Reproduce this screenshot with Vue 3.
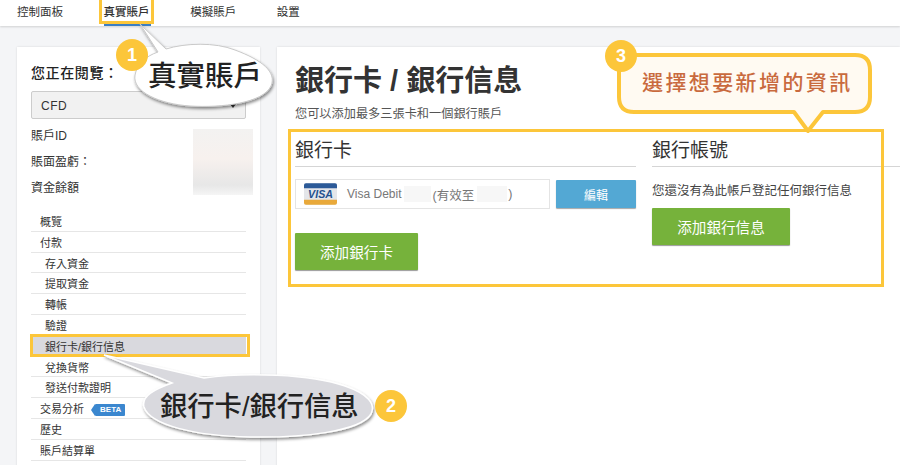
<script setup>
const navItems = ["控制面板", "真實賬戶", "模擬賬戶", "設置"];

const balances = ["賬戶ID", "賬面盈虧：", "資金餘額"];

// sub: 縮排的子選單
const menu = [
  { label: "概覽" },
  { label: "付款" },
  { label: "存入資金", sub: true },
  { label: "提取資金", sub: true },
  { label: "轉帳", sub: true },
  { label: "驗證", sub: true },
  { label: "銀行卡/銀行信息", sub: true, active: true },
  { label: "兌換貨幣", sub: true },
  { label: "發送付款證明", sub: true },
  { label: "交易分析", beta: true },
  { label: "歷史" },
  { label: "賬戶結算單" },
];
</script>

<template>
  <div class="page">
    <header class="topbar">
      <a
        v-for="(item, i) in navItems"
        :key="item"
        class="nav-item"
        :class="{ current: i === 1 }"
      >{{ item }}</a>
    </header>

    <div class="content">
      <aside class="sidebar">
        <h4 class="viewing">您正在閱覽：</h4>
        <div class="select">
          <span>CFD</span>
          <i class="caret"></i>
        </div>
        <div class="balances">
          <div class="balance-list">
            <p v-for="b in balances" :key="b">{{ b }}</p>
          </div>
          <div class="blurred"></div>
        </div>
        <ul class="menu">
          <li
            v-for="m in menu"
            :key="m.label"
            :class="{ sub: m.sub, active: m.active }"
          >
            {{ m.label }}
            <span v-if="m.beta" class="beta">BETA</span>
          </li>
        </ul>
      </aside>

      <main class="main">
        <h1>銀行卡 / 銀行信息</h1>
        <p class="lead">您可以添加最多三張卡和一個銀行賬戶</p>
        <div class="columns">
          <section class="col-card">
            <h3>銀行卡</h3>
            <div class="card-row">
              <div class="card-box">
                <svg class="visa" width="33" height="22" viewBox="0 0 34 22">
                  <rect width="34" height="22" rx="2" fill="#e4e6ea" />
                  <path d="M0 5V2a2 2 0 0 1 2-2h30a2 2 0 0 1 2 2v3z" fill="#2c5a98" />
                  <path d="M0 17h34v3a2 2 0 0 1-2 2H2a2 2 0 0 1-2-2z" fill="#e9a93a" />
                  <text x="17" y="15" text-anchor="middle" class="visa-text">VISA</text>
                </svg>
                <span class="card-name">Visa Debit</span>
                <span class="mask m1"></span>
                <span class="card-name cjk">(有效至</span>
                <span class="mask m2"></span>
                <span class="card-name cjk">)</span>
              </div>
              <button class="btn-edit">編輯</button>
            </div>
            <button class="btn-add add-card">添加銀行卡</button>
          </section>
          <section class="col-bank">
            <h3>銀行帳號</h3>
            <p class="empty">您還沒有為此帳戶登記任何銀行信息</p>
            <button class="btn-add add-bank">添加銀行信息</button>
          </section>
        </div>
      </main>
    </div>

    <!-- 教學標註 -->
    <div class="hl hl-nav"></div>
    <div class="hl hl-menu"></div>
    <div class="hl hl-frame"></div>

    <svg class="overlay" width="900" height="465" viewBox="0 0 900 465">
      <defs>
        <filter id="sh" x="-10%" y="-20%" width="120%" height="150%">
          <feDropShadow dx="1" dy="2" stdDeviation="1.5" flood-color="#000" flood-opacity="0.45" />
        </filter>
      </defs>
      <path
        d="M140 24 L166 49 C185 43 215 42 235 50 C262 60 277 72 271 86 C263 103 222 108 190 106 C160 104 132 92 135 75 C137 64 146 56 158 52 Z"
        fill="#fff" stroke="#c9c9c9" filter="url(#sh)"
      />
      <path
        d="M104 355 L204 378 C245 372 310 374 345 386 C368 394 376 404 371 414 C360 432 300 438 250 437 C195 436 150 425 144 407 C141 396 155 389 172 383 Z"
        fill="#d9d9de" stroke="#fff" stroke-width="1.5" filter="url(#sh)"
      />
      <path
        d="M632 55 H855 Q870 55 870 70 V97 Q870 112 855 112 H823 L808 131 L794 112 H634 Q619 112 619 97 V70 Q619 55 632 55 Z"
        fill="#fffaf2" stroke="#fcc63a" stroke-width="4" stroke-linejoin="round"
      />
    </svg>

    <span class="bubble-text t1">真實賬戶</span>
    <span class="bubble-text t2">銀行卡/銀行信息</span>
    <span class="tip-text">選擇想要新增的資訊</span>

    <span class="badge b1">1</span>
    <span class="badge b2">2</span>
    <span class="badge b3">3</span>
  </div>
</template>

<style scoped>
.page {
  position: relative;
  width: 900px;
  height: 465px;
  overflow: hidden;
  background: #f4f5f7;
  font-family: "Liberation Sans", "Noto Sans CJK TC", sans-serif;
  color: #333;
}

.topbar {
  display: flex;
  height: 26px;
  padding-left: 17px;
  background: #fff;
  box-shadow: 0 1px 2px rgba(0, 0, 0, 0.15);
}

.nav-item {
  width: 86.6px;
  font-size: 11.5px;
  line-height: 25px;
  color: #333;
}

.nav-item.current {
  position: relative;
  font-weight: 500;
}

.nav-item.current::after {
  content: "";
  position: absolute;
  left: 0;
  bottom: 0;
  width: 47px;
  height: 2px;
  background: #3b7fc4;
}

.content {
  display: flex;
  gap: 17px;
  padding: 21px 0 0 17px;
}

.sidebar {
  width: 243px;
  height: 420px;
  padding: 17px 14px 0;
  box-sizing: border-box;
  background: #fff;
  box-shadow: 0 0 2px rgba(0, 0, 0, 0.12);
}

.viewing {
  margin: 0 0 8px;
  font-size: 14px;
  font-weight: 500;
  letter-spacing: 0.6px;
  line-height: 19px;
  color: #222;
}

.select {
  display: flex;
  align-items: center;
  justify-content: space-between;
  width: 215px;
  height: 28px;
  padding: 1px 9px 0;
  box-sizing: border-box;
  border: 1px solid #ccc;
  border-radius: 2px;
  background: #f1f1f1;
  font-size: 12px;
  letter-spacing: 0.5px;
}

.caret {
  border-left: 3px solid transparent;
  border-right: 3px solid transparent;
  border-top: 4px solid #333;
}

.balances {
  display: flex;
  justify-content: space-between;
  height: 92px;
  margin-right: -7px;
  padding-top: 9px;
  box-sizing: border-box;
}

.balance-list p {
  margin: 0 0 9px;
  font-size: 12px;
  line-height: 17px;
}

.blurred {
  width: 60px;
  height: 66px;
  margin-top: 1px;
  background: linear-gradient(180deg, #f3f2f1 0%, #f7f1ee 45%, #e7e7e7 85%, #f5f5f5 100%);
}

.menu {
  width: 215px;
  margin: 0;
  padding: 0;
  list-style: none;
}

.menu li {
  height: 20.8px;
  padding-left: 9px;
  box-sizing: border-box;
  border-bottom: 1px solid #e6e6e6;
  font-size: 11px;
  line-height: 22px;
  white-space: nowrap;
}

.menu li.sub {
  padding-left: 14px;
}

.menu li.active {
  background: #d9d9de;
}

.beta {
  display: inline-block;
  position: relative;
  margin-left: 8px;
  padding: 0 4px 0 5px;
  background: #3b87cf;
  border-radius: 1px;
  color: #fff;
  font-size: 8px;
  font-weight: bold;
  line-height: 12px;
  vertical-align: 1px;
}

.beta::before {
  content: "";
  position: absolute;
  left: -4px;
  top: 0;
  border-top: 6px solid transparent;
  border-bottom: 6px solid transparent;
  border-right: 4px solid #3b87cf;
}

.main {
  flex: 1;
  height: 420px;
  padding: 16px 0 0 18px;
  box-sizing: border-box;
  background: #fff;
  box-shadow: 0 0 2px rgba(0, 0, 0, 0.12);
}

h1 {
  margin: 0;
  font-size: 29px;
  font-weight: 700;
  line-height: 36px;
  color: #333;
}

.lead {
  margin: 6px 0 0;
  font-size: 12.2px;
  line-height: 18px;
  color: #555;
}

.columns {
  display: flex;
  gap: 16px;
  margin-top: 14px;
}

.col-card {
  width: 341px;
}

.col-bank {
  flex: 1;
}

h3 {
  margin: 0;
  height: 29px;
  border-bottom: 1px solid #d5d5d5;
  font-size: 19px;
  font-weight: 400;
  line-height: 27px;
  color: #333;
}

.card-row {
  display: flex;
  justify-content: space-between;
  align-items: center;
  margin-top: 12px;
}

.card-box {
  display: flex;
  align-items: center;
  width: 255px;
  height: 30px;
  padding-left: 8px;
  box-sizing: border-box;
  border: 1px solid #e4e4e4;
}

.visa {
  margin-right: 10px;
}

.visa-text {
  font-family: "Liberation Sans", sans-serif;
  font-size: 11px;
  font-style: italic;
  font-weight: 700;
  fill: #24528f;
}

.card-name {
  font-size: 12px;
  color: #777;
}

.card-name.cjk {
  font-size: 12.5px;
}

.mask {
  height: 16px;
  background: #f7f7f7;
}

.m1 {
  width: 27px;
  margin: 0 1px 0 3px;
}

.m2 {
  width: 30px;
  margin: 0 1px 0 3px;
}

.btn-edit {
  width: 80px;
  height: 28px;
  border: 0;
  border-radius: 1px;
  background: #53a8d4;
  box-shadow: 0 1px 1px rgba(0, 0, 0, 0.35);
  color: #fff;
  font-family: inherit;
  font-size: 12px;
}

.btn-add {
  display: block;
  height: 37px;
  border: 0;
  border-radius: 1px;
  background: #76b23b;
  box-shadow: 0 1px 1px rgba(0, 0, 0, 0.4);
  color: #fff;
  font-family: inherit;
  font-size: 14.6px;
}

.add-card {
  width: 123px;
  margin-top: 24px;
}

.add-bank {
  width: 138px;
  margin-top: 8px;
}

.empty {
  margin: 15px 0 0;
  font-size: 12.5px;
  line-height: 18px;
  color: #444;
}

.hl {
  position: absolute;
  box-sizing: border-box;
  border: 3px solid #fcc63a;
}

.hl-nav {
  left: 99px;
  top: -3px;
  width: 55px;
  height: 27px;
}

.hl-menu {
  left: 30px;
  top: 334px;
  width: 220px;
  height: 23px;
}

.hl-frame {
  left: 288px;
  top: 129px;
  width: 596px;
  height: 158px;
}

.overlay {
  position: absolute;
  left: 0;
  top: 0;
}

.bubble-text {
  position: absolute;
  font-weight: 500;
  line-height: 1;
  white-space: nowrap;
  color: #222;
}

.t1 {
  left: 148px;
  top: 62px;
  font-size: 28.5px;
}

.t2 {
  left: 160px;
  top: 393px;
  font-size: 27.3px;
}

.tip-text {
  position: absolute;
  left: 642px;
  top: 71px;
  font-size: 21px;
  font-weight: 500;
  letter-spacing: 2.4px;
  line-height: 24px;
  white-space: nowrap;
  color: #c96a3e;
}

.badge {
  position: absolute;
  width: 32px;
  height: 32px;
  border-radius: 50%;
  background: #fcc63a;
  color: #fff;
  font-size: 18px;
  font-weight: 700;
  line-height: 32px;
  text-align: center;
}

.b1 {
  left: 116px;
  top: 39px;
}

.b2 {
  left: 375px;
  top: 390px;
}

.b3 {
  left: 605px;
  top: 40px;
}
</style>
